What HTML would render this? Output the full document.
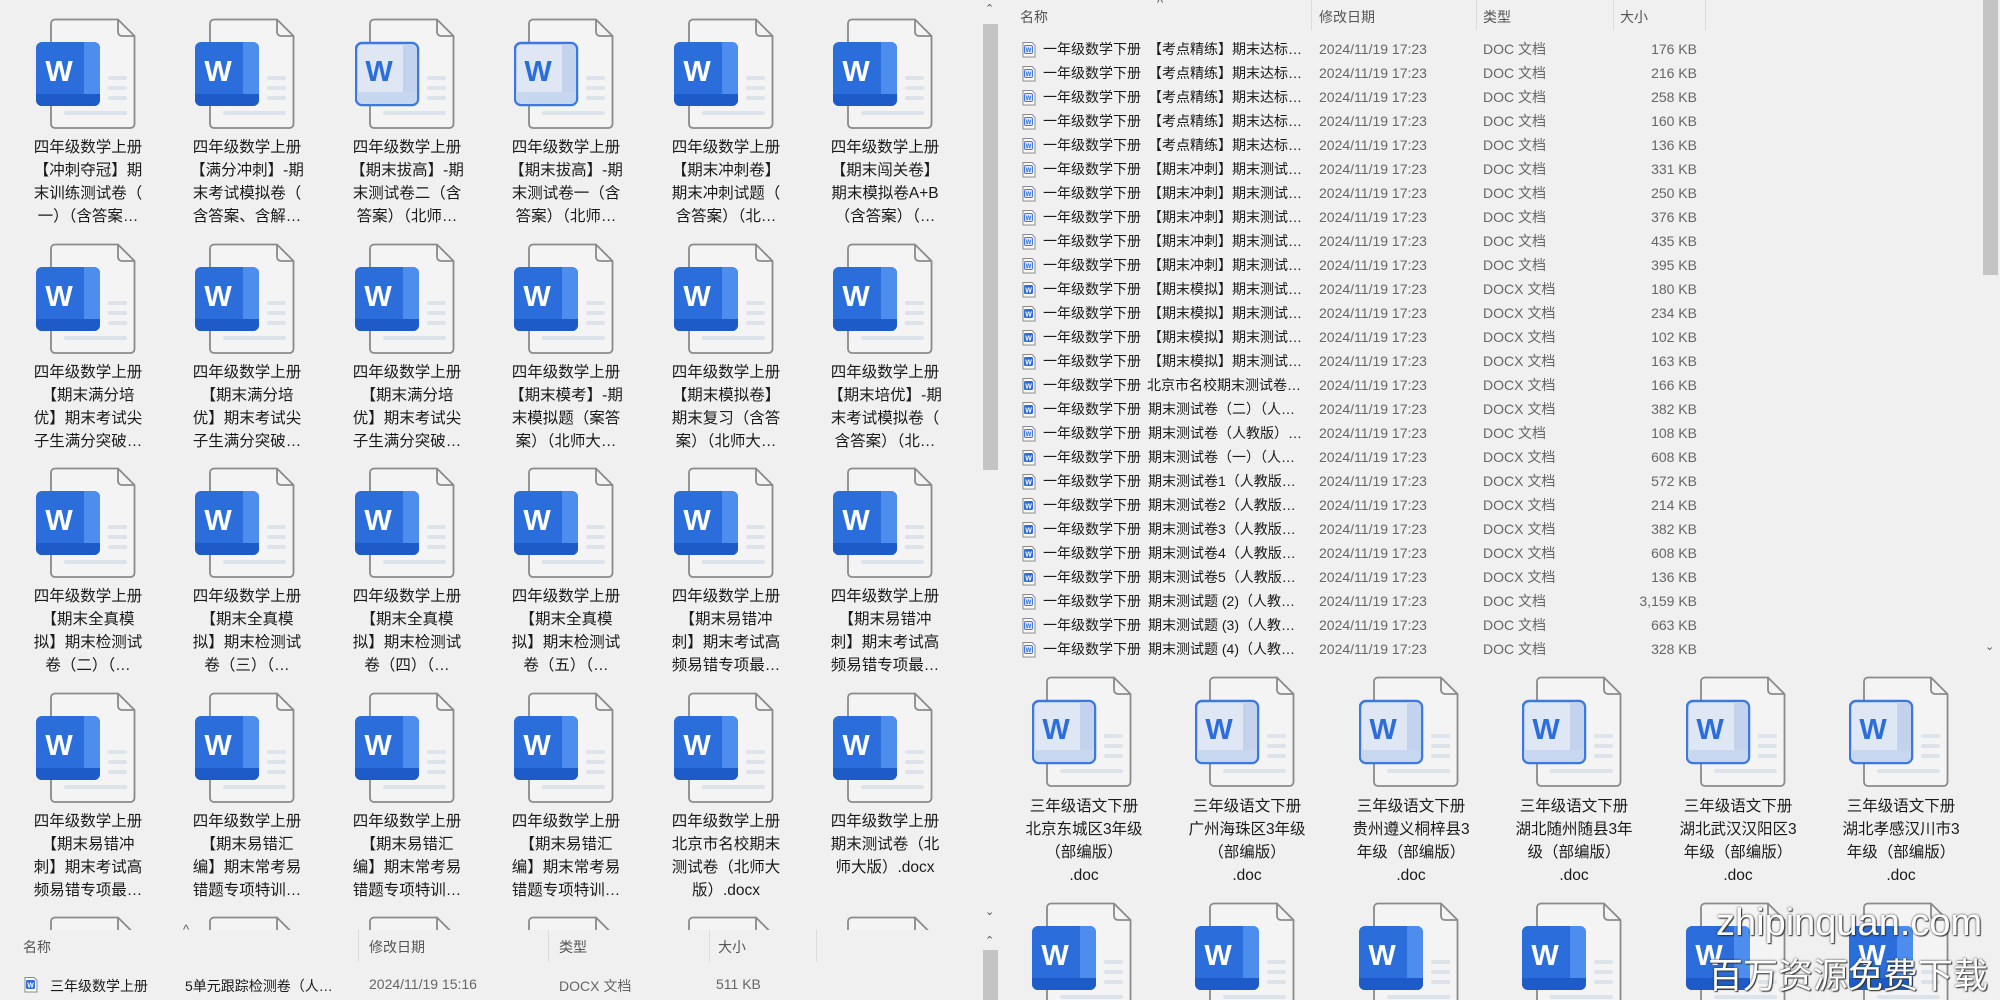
<!DOCTYPE html>
<html><head><meta charset="utf-8">
<style>
*{margin:0;padding:0;box-sizing:border-box}
body{width:2000px;height:1000px;overflow:hidden;background:#f0f0f0;font-family:"Liberation Sans","Noto Sans CJK SC",sans-serif;color:#1a1a1a;position:relative}
.a{position:absolute}
.ic{position:absolute;width:100px;height:115px}
.t{position:absolute;width:150px;text-align:center;font-size:15.5px;line-height:23px;white-space:nowrap;color:#1a1a1a}
.row{position:absolute;left:1000px;width:980px;height:24px;font-size:14px;line-height:24px;white-space:nowrap}
.row span{position:absolute}
.row .n{left:43px;color:#1a1a1a}
.row .m{left:148px;color:#1a1a1a}
.row .d{left:319px;color:#666}
.row .y{left:483px;color:#666}
.row .s{right:283px;color:#666;text-align:right}
.row svg{position:absolute;left:22px;top:4px}
.hd{position:absolute;font-size:14px;color:#555}
.sep{position:absolute;width:1px;background:#dcdcdc}
</style></head><body>
<svg width="0" height="0" style="position:absolute">
<defs>
<symbol id="pg" viewBox="0 0 100 115">
<path d="M19 1.5 H82 L98.5 18 V106 a4 4 0 0 1 -4 4 H19 a4 4 0 0 1 -4 -4 V5.5 a4 4 0 0 1 4 -4Z" fill="#f4f4f4" stroke="#8a8a8a" stroke-width="1.8"/>
<path d="M82 1.5 V14 a4 4 0 0 0 4 4 H98.5" fill="none" stroke="#8a8a8a" stroke-width="1.8"/>
<rect x="72" y="58" width="19" height="4" rx="2" fill="#dde3ea"/>
<rect x="72" y="68" width="19" height="4" rx="2" fill="#dde3ea"/>
<rect x="72" y="78" width="19" height="4" rx="2" fill="#dde3ea"/>
<rect x="28" y="93" width="63" height="4" rx="2" fill="#dde3ea"/>
</symbol>
<symbol id="ds" viewBox="0 0 100 115">
<use href="#pg"/>
<rect x="0" y="24" width="64" height="64" rx="6" fill="#2a6ddb"/>
<path d="M48 24 H58 a6 6 0 0 1 6 6 V82 a6 6 0 0 1 -6 6 H48Z" fill="#4d8ded"/>
<path d="M0 76 H64 V82 a6 6 0 0 1 -6 6 H6 a6 6 0 0 1 -6 -6Z" fill="#1c5bc8"/>
<text x="23" y="63" text-anchor="middle" font-family="Liberation Sans,sans-serif" font-weight="bold" font-size="29" fill="#fff">W</text>
</symbol>
<symbol id="do" viewBox="0 0 100 115">
<use href="#pg"/>
<rect x="1" y="25" width="62" height="62" rx="6" fill="#dfe7f5" stroke="#3b79e0" stroke-width="2.5"/>
<path d="M48 26 H57 a5 5 0 0 1 5 5 V81 a5 5 0 0 1 -5 5 H48Z" fill="#c3d3ee"/>
<path d="M2 74 H62 V81 a5 5 0 0 1 -5 5 H7 a5 5 0 0 1 -5 -5Z" fill="#c8d7f0"/>
<text x="24" y="63" text-anchor="middle" font-family="Liberation Sans,sans-serif" font-weight="bold" font-size="29" fill="#2a6ddb">W</text>
</symbol>
<symbol id="sx" viewBox="0 0 14 17"><path d="M1 1.5 H10 L13 4.5 V16 H1Z" fill="#fff" stroke="#8a8a8a"/><rect x="2" y="4" width="9" height="9" rx="1.5" fill="#2a6ddb"/><text x="6.5" y="11.5" text-anchor="middle" font-size="7" font-weight="bold" fill="#fff" font-family="Liberation Sans">W</text></symbol>
<symbol id="sd" viewBox="0 0 14 17"><path d="M1 1.5 H10 L13 4.5 V16 H1Z" fill="#fff" stroke="#8a8a8a"/><rect x="2.5" y="4.5" width="8" height="8" rx="1.5" fill="#e3ebf8" stroke="#3b79e0"/><text x="6.5" y="11" text-anchor="middle" font-size="6" font-weight="bold" fill="#2a6ddb" font-family="Liberation Sans">W</text></symbol>
</defs></svg>

<!-- LEFT PANEL ICONS -->
<div class="a" style="left:0;top:0;width:980px;height:932px;overflow:hidden">
<svg class="ic" style="left:36px;top:18px"><use href="#ds"/></svg>
<svg class="ic" style="left:195px;top:18px"><use href="#ds"/></svg>
<svg class="ic" style="left:355px;top:18px"><use href="#do"/></svg>
<svg class="ic" style="left:514px;top:18px"><use href="#do"/></svg>
<svg class="ic" style="left:674px;top:18px"><use href="#ds"/></svg>
<svg class="ic" style="left:833px;top:18px"><use href="#ds"/></svg>
<svg class="ic" style="left:36px;top:243px"><use href="#ds"/></svg>
<svg class="ic" style="left:195px;top:243px"><use href="#ds"/></svg>
<svg class="ic" style="left:355px;top:243px"><use href="#ds"/></svg>
<svg class="ic" style="left:514px;top:243px"><use href="#ds"/></svg>
<svg class="ic" style="left:674px;top:243px"><use href="#ds"/></svg>
<svg class="ic" style="left:833px;top:243px"><use href="#ds"/></svg>
<svg class="ic" style="left:36px;top:467px"><use href="#ds"/></svg>
<svg class="ic" style="left:195px;top:467px"><use href="#ds"/></svg>
<svg class="ic" style="left:355px;top:467px"><use href="#ds"/></svg>
<svg class="ic" style="left:514px;top:467px"><use href="#ds"/></svg>
<svg class="ic" style="left:674px;top:467px"><use href="#ds"/></svg>
<svg class="ic" style="left:833px;top:467px"><use href="#ds"/></svg>
<svg class="ic" style="left:36px;top:692px"><use href="#ds"/></svg>
<svg class="ic" style="left:195px;top:692px"><use href="#ds"/></svg>
<svg class="ic" style="left:355px;top:692px"><use href="#ds"/></svg>
<svg class="ic" style="left:514px;top:692px"><use href="#ds"/></svg>
<svg class="ic" style="left:674px;top:692px"><use href="#ds"/></svg>
<svg class="ic" style="left:833px;top:692px"><use href="#ds"/></svg>
<svg class="ic" style="left:36px;top:916px"><use href="#ds"/></svg>
<svg class="ic" style="left:195px;top:916px"><use href="#ds"/></svg>
<svg class="ic" style="left:355px;top:916px"><use href="#ds"/></svg>
<svg class="ic" style="left:514px;top:916px"><use href="#ds"/></svg>
<svg class="ic" style="left:674px;top:916px"><use href="#ds"/></svg>
<svg class="ic" style="left:833px;top:916px"><use href="#ds"/></svg>

<div class="t" style="left:13px;top:136px">四年级数学上册<br>【冲刺夺冠】期<br>末训练测试卷（<br>一）（含答案…</div>
<div class="t" style="left:172px;top:136px">四年级数学上册<br>【满分冲刺】-期<br>末考试模拟卷（<br>含答案、含解…</div>
<div class="t" style="left:332px;top:136px">四年级数学上册<br>【期末拔高】-期<br>末测试卷二（含<br>答案）（北师…</div>
<div class="t" style="left:491px;top:136px">四年级数学上册<br>【期末拔高】-期<br>末测试卷一（含<br>答案）（北师…</div>
<div class="t" style="left:651px;top:136px">四年级数学上册<br>【期末冲刺卷】<br>期末冲刺试题（<br>含答案）（北…</div>
<div class="t" style="left:810px;top:136px">四年级数学上册<br>【期末闯关卷】<br>期末模拟卷A+B<br>（含答案）（…</div>

<div class="t" style="left:13px;top:361px">四年级数学上册<br>【期末满分培<br>优】期末考试尖<br>子生满分突破…</div>
<div class="t" style="left:172px;top:361px">四年级数学上册<br>【期末满分培<br>优】期末考试尖<br>子生满分突破…</div>
<div class="t" style="left:332px;top:361px">四年级数学上册<br>【期末满分培<br>优】期末考试尖<br>子生满分突破…</div>
<div class="t" style="left:491px;top:361px">四年级数学上册<br>【期末模考】-期<br>末模拟题（案答<br>案）（北师大…</div>
<div class="t" style="left:651px;top:361px">四年级数学上册<br>【期末模拟卷】<br>期末复习（含答<br>案）（北师大…</div>
<div class="t" style="left:810px;top:361px">四年级数学上册<br>【期末培优】-期<br>末考试模拟卷（<br>含答案）（北…</div>

<div class="t" style="left:13px;top:585px">四年级数学上册<br>【期末全真模<br>拟】期末检测试<br>卷（二）（…</div>
<div class="t" style="left:172px;top:585px">四年级数学上册<br>【期末全真模<br>拟】期末检测试<br>卷（三）（…</div>
<div class="t" style="left:332px;top:585px">四年级数学上册<br>【期末全真模<br>拟】期末检测试<br>卷（四）（…</div>
<div class="t" style="left:491px;top:585px">四年级数学上册<br>【期末全真模<br>拟】期末检测试<br>卷（五）（…</div>
<div class="t" style="left:651px;top:585px">四年级数学上册<br>【期末易错冲<br>刺】期末考试高<br>频易错专项最…</div>
<div class="t" style="left:810px;top:585px">四年级数学上册<br>【期末易错冲<br>刺】期末考试高<br>频易错专项最…</div>

<div class="t" style="left:13px;top:810px">四年级数学上册<br>【期末易错冲<br>刺】期末考试高<br>频易错专项最…</div>
<div class="t" style="left:172px;top:810px">四年级数学上册<br>【期末易错汇<br>编】期末常考易<br>错题专项特训…</div>
<div class="t" style="left:332px;top:810px">四年级数学上册<br>【期末易错汇<br>编】期末常考易<br>错题专项特训…</div>
<div class="t" style="left:491px;top:810px">四年级数学上册<br>【期末易错汇<br>编】期末常考易<br>错题专项特训…</div>
<div class="t" style="left:651px;top:810px">四年级数学上册<br>北京市名校期末<br>测试卷（北师大<br>版）.docx</div>
<div class="t" style="left:810px;top:810px">四年级数学上册<br>期末测试卷（北<br>师大版）.docx</div>
</div>

<!-- left bottom details -->
<div class="a" style="left:0;top:930px;width:980px;height:70px;background:#f0f0f0"></div>
<div class="hd" style="left:23px;top:937px">名称</div>
<div class="hd" style="left:183px;top:922px;font-size:13px">^</div>
<div class="hd" style="left:369px;top:937px">修改日期</div>
<div class="hd" style="left:559px;top:937px">类型</div>
<div class="hd" style="left:718px;top:937px">大小</div>
<div class="sep" style="left:358px;top:930px;height:32px"></div>
<div class="sep" style="left:548px;top:930px;height:32px"></div>
<div class="sep" style="left:709px;top:930px;height:32px"></div>
<div class="sep" style="left:816px;top:930px;height:32px"></div>
<svg class="a" style="left:24px;top:976px" width="14" height="17"><use href="#sx"/></svg>
<div class="a" style="left:50px;top:976px;font-size:14px;white-space:nowrap">三年级数学上册</div>
<div class="a" style="left:185px;top:976px;font-size:14px;white-space:nowrap">5单元跟踪检测卷（人…</div>
<div class="a" style="left:369px;top:976px;font-size:14px;color:#666">2024/11/19 15:16</div>
<div class="a" style="left:559px;top:976px;font-size:14px;color:#666">DOCX 文档</div>
<div class="a" style="left:716px;top:976px;font-size:14px;color:#666">511 KB</div>

<!-- middle scrollbars -->
<div class="a" style="left:981px;top:0;width:19px;height:1000px;background:#f0f0f0"></div>
<div class="a" style="left:985px;top:2px;font-size:11px;color:#555">⌃</div>
<div class="a" style="left:983px;top:24px;width:15px;height:446px;background:#c4c4c4"></div>
<div class="a" style="left:985px;top:905px;font-size:11px;color:#555">⌄</div>
<div class="a" style="left:985px;top:934px;font-size:11px;color:#555">⌃</div>
<div class="a" style="left:983px;top:950px;width:15px;height:50px;background:#c4c4c4"></div>

<!-- right table -->
<div class="hd" style="left:1020px;top:7px">名称</div>
<div class="hd" style="left:1157px;top:-5px;font-size:13px">^</div>
<div class="hd" style="left:1319px;top:7px">修改日期</div>
<div class="hd" style="left:1483px;top:7px">类型</div>
<div class="hd" style="left:1620px;top:7px">大小</div>
<div class="sep" style="left:1311px;top:0;height:30px"></div>
<div class="sep" style="left:1476px;top:0;height:30px"></div>
<div class="sep" style="left:1613px;top:0;height:30px"></div>
<div class="sep" style="left:1705px;top:0;height:30px"></div>

<div class="row" style="top:37px"><svg width="14" height="17"><use href="#sd"/></svg><span class="n">一年级数学下册</span><span class="m">【考点精练】期末达标…</span><span class="d">2024/11/19 17:23</span><span class="y">DOC 文档</span><span class="s">176 KB</span></div>
<div class="row" style="top:61px"><svg width="14" height="17"><use href="#sd"/></svg><span class="n">一年级数学下册</span><span class="m">【考点精练】期末达标…</span><span class="d">2024/11/19 17:23</span><span class="y">DOC 文档</span><span class="s">216 KB</span></div>
<div class="row" style="top:85px"><svg width="14" height="17"><use href="#sd"/></svg><span class="n">一年级数学下册</span><span class="m">【考点精练】期末达标…</span><span class="d">2024/11/19 17:23</span><span class="y">DOC 文档</span><span class="s">258 KB</span></div>
<div class="row" style="top:109px"><svg width="14" height="17"><use href="#sd"/></svg><span class="n">一年级数学下册</span><span class="m">【考点精练】期末达标…</span><span class="d">2024/11/19 17:23</span><span class="y">DOC 文档</span><span class="s">160 KB</span></div>
<div class="row" style="top:133px"><svg width="14" height="17"><use href="#sd"/></svg><span class="n">一年级数学下册</span><span class="m">【考点精练】期末达标…</span><span class="d">2024/11/19 17:23</span><span class="y">DOC 文档</span><span class="s">136 KB</span></div>
<div class="row" style="top:157px"><svg width="14" height="17"><use href="#sd"/></svg><span class="n">一年级数学下册</span><span class="m">【期末冲刺】期末测试…</span><span class="d">2024/11/19 17:23</span><span class="y">DOC 文档</span><span class="s">331 KB</span></div>
<div class="row" style="top:181px"><svg width="14" height="17"><use href="#sd"/></svg><span class="n">一年级数学下册</span><span class="m">【期末冲刺】期末测试…</span><span class="d">2024/11/19 17:23</span><span class="y">DOC 文档</span><span class="s">250 KB</span></div>
<div class="row" style="top:205px"><svg width="14" height="17"><use href="#sd"/></svg><span class="n">一年级数学下册</span><span class="m">【期末冲刺】期末测试…</span><span class="d">2024/11/19 17:23</span><span class="y">DOC 文档</span><span class="s">376 KB</span></div>
<div class="row" style="top:229px"><svg width="14" height="17"><use href="#sd"/></svg><span class="n">一年级数学下册</span><span class="m">【期末冲刺】期末测试…</span><span class="d">2024/11/19 17:23</span><span class="y">DOC 文档</span><span class="s">435 KB</span></div>
<div class="row" style="top:253px"><svg width="14" height="17"><use href="#sd"/></svg><span class="n">一年级数学下册</span><span class="m">【期末冲刺】期末测试…</span><span class="d">2024/11/19 17:23</span><span class="y">DOC 文档</span><span class="s">395 KB</span></div>
<div class="row" style="top:277px"><svg width="14" height="17"><use href="#sx"/></svg><span class="n">一年级数学下册</span><span class="m">【期末模拟】期末测试…</span><span class="d">2024/11/19 17:23</span><span class="y">DOCX 文档</span><span class="s">180 KB</span></div>
<div class="row" style="top:301px"><svg width="14" height="17"><use href="#sx"/></svg><span class="n">一年级数学下册</span><span class="m">【期末模拟】期末测试…</span><span class="d">2024/11/19 17:23</span><span class="y">DOCX 文档</span><span class="s">234 KB</span></div>
<div class="row" style="top:325px"><svg width="14" height="17"><use href="#sx"/></svg><span class="n">一年级数学下册</span><span class="m">【期末模拟】期末测试…</span><span class="d">2024/11/19 17:23</span><span class="y">DOCX 文档</span><span class="s">102 KB</span></div>
<div class="row" style="top:349px"><svg width="14" height="17"><use href="#sx"/></svg><span class="n">一年级数学下册</span><span class="m">【期末模拟】期末测试…</span><span class="d">2024/11/19 17:23</span><span class="y">DOCX 文档</span><span class="s">163 KB</span></div>
<div class="row" style="top:373px"><svg width="14" height="17"><use href="#sx"/></svg><span class="n">一年级数学下册</span><span class="m" style="left:147px">北京市名校期末测试卷…</span><span class="d">2024/11/19 17:23</span><span class="y">DOCX 文档</span><span class="s">166 KB</span></div>
<div class="row" style="top:397px"><svg width="14" height="17"><use href="#sx"/></svg><span class="n">一年级数学下册</span><span class="m">期末测试卷（二）（人…</span><span class="d">2024/11/19 17:23</span><span class="y">DOCX 文档</span><span class="s">382 KB</span></div>
<div class="row" style="top:421px"><svg width="14" height="17"><use href="#sd"/></svg><span class="n">一年级数学下册</span><span class="m">期末测试卷（人教版）…</span><span class="d">2024/11/19 17:23</span><span class="y">DOC 文档</span><span class="s">108 KB</span></div>
<div class="row" style="top:445px"><svg width="14" height="17"><use href="#sx"/></svg><span class="n">一年级数学下册</span><span class="m">期末测试卷（一）（人…</span><span class="d">2024/11/19 17:23</span><span class="y">DOCX 文档</span><span class="s">608 KB</span></div>
<div class="row" style="top:469px"><svg width="14" height="17"><use href="#sx"/></svg><span class="n">一年级数学下册</span><span class="m">期末测试卷1（人教版…</span><span class="d">2024/11/19 17:23</span><span class="y">DOCX 文档</span><span class="s">572 KB</span></div>
<div class="row" style="top:493px"><svg width="14" height="17"><use href="#sx"/></svg><span class="n">一年级数学下册</span><span class="m">期末测试卷2（人教版…</span><span class="d">2024/11/19 17:23</span><span class="y">DOCX 文档</span><span class="s">214 KB</span></div>
<div class="row" style="top:517px"><svg width="14" height="17"><use href="#sx"/></svg><span class="n">一年级数学下册</span><span class="m">期末测试卷3（人教版…</span><span class="d">2024/11/19 17:23</span><span class="y">DOCX 文档</span><span class="s">382 KB</span></div>
<div class="row" style="top:541px"><svg width="14" height="17"><use href="#sx"/></svg><span class="n">一年级数学下册</span><span class="m">期末测试卷4（人教版…</span><span class="d">2024/11/19 17:23</span><span class="y">DOCX 文档</span><span class="s">608 KB</span></div>
<div class="row" style="top:565px"><svg width="14" height="17"><use href="#sx"/></svg><span class="n">一年级数学下册</span><span class="m">期末测试卷5（人教版…</span><span class="d">2024/11/19 17:23</span><span class="y">DOCX 文档</span><span class="s">136 KB</span></div>
<div class="row" style="top:589px"><svg width="14" height="17"><use href="#sd"/></svg><span class="n">一年级数学下册</span><span class="m">期末测试题 (2)（人教…</span><span class="d">2024/11/19 17:23</span><span class="y">DOC 文档</span><span class="s">3,159 KB</span></div>
<div class="row" style="top:613px"><svg width="14" height="17"><use href="#sd"/></svg><span class="n">一年级数学下册</span><span class="m">期末测试题 (3)（人教…</span><span class="d">2024/11/19 17:23</span><span class="y">DOC 文档</span><span class="s">663 KB</span></div>
<div class="row" style="top:637px"><svg width="14" height="17"><use href="#sd"/></svg><span class="n">一年级数学下册</span><span class="m">期末测试题 (4)（人教…</span><span class="d">2024/11/19 17:23</span><span class="y">DOC 文档</span><span class="s">328 KB</span></div>

<!-- right scrollbar -->
<div class="a" style="left:1981px;top:0;width:19px;height:660px;background:#f0f0f0"></div>
<div class="a" style="left:1983px;top:0;width:15px;height:275px;background:#c4c4c4"></div>
<div class="a" style="left:1985px;top:640px;font-size:11px;color:#555">⌄</div>

<!-- right bottom icons -->
<div class="a" style="left:1000px;top:664px;width:1000px;height:336px;overflow:hidden">
<svg class="ic" style="left:32px;top:12px"><use href="#do"/></svg>
<svg class="ic" style="left:195px;top:12px"><use href="#do"/></svg>
<svg class="ic" style="left:359px;top:12px"><use href="#do"/></svg>
<svg class="ic" style="left:522px;top:12px"><use href="#do"/></svg>
<svg class="ic" style="left:686px;top:12px"><use href="#do"/></svg>
<svg class="ic" style="left:849px;top:12px"><use href="#do"/></svg>
<svg class="ic" style="left:32px;top:238px"><use href="#ds"/></svg>
<svg class="ic" style="left:195px;top:238px"><use href="#ds"/></svg>
<svg class="ic" style="left:359px;top:238px"><use href="#ds"/></svg>
<svg class="ic" style="left:522px;top:238px"><use href="#ds"/></svg>
<svg class="ic" style="left:686px;top:238px"><use href="#ds"/></svg>
<svg class="ic" style="left:849px;top:238px"><use href="#ds"/></svg>
<div class="t" style="left:9px;top:131px">三年级语文下册<br>北京东城区3年级<br>（部编版）<br>.doc</div>
<div class="t" style="left:172px;top:131px">三年级语文下册<br>广州海珠区3年级<br>（部编版）<br>.doc</div>
<div class="t" style="left:336px;top:131px">三年级语文下册<br>贵州遵义桐梓县3<br>年级（部编版）<br>.doc</div>
<div class="t" style="left:499px;top:131px">三年级语文下册<br>湖北随州随县3年<br>级（部编版）<br>.doc</div>
<div class="t" style="left:663px;top:131px">三年级语文下册<br>湖北武汉汉阳区3<br>年级（部编版）<br>.doc</div>
<div class="t" style="left:826px;top:131px">三年级语文下册<br>湖北孝感汉川市3<br>年级（部编版）<br>.doc</div>
</div>

<!-- watermark -->
<div class="a" style="left:1716px;top:902px;font-size:38px;color:#fff;white-space:nowrap;text-shadow:0 0 2px #333,1px 1px 1px #333">zhipinquan.com</div>
<div class="a" style="left:1708px;top:948px;font-size:35px;color:#fff;white-space:nowrap;text-shadow:0 0 2px #333,1px 1px 1px #333">百万资源免费下载</div>
</body></html>
